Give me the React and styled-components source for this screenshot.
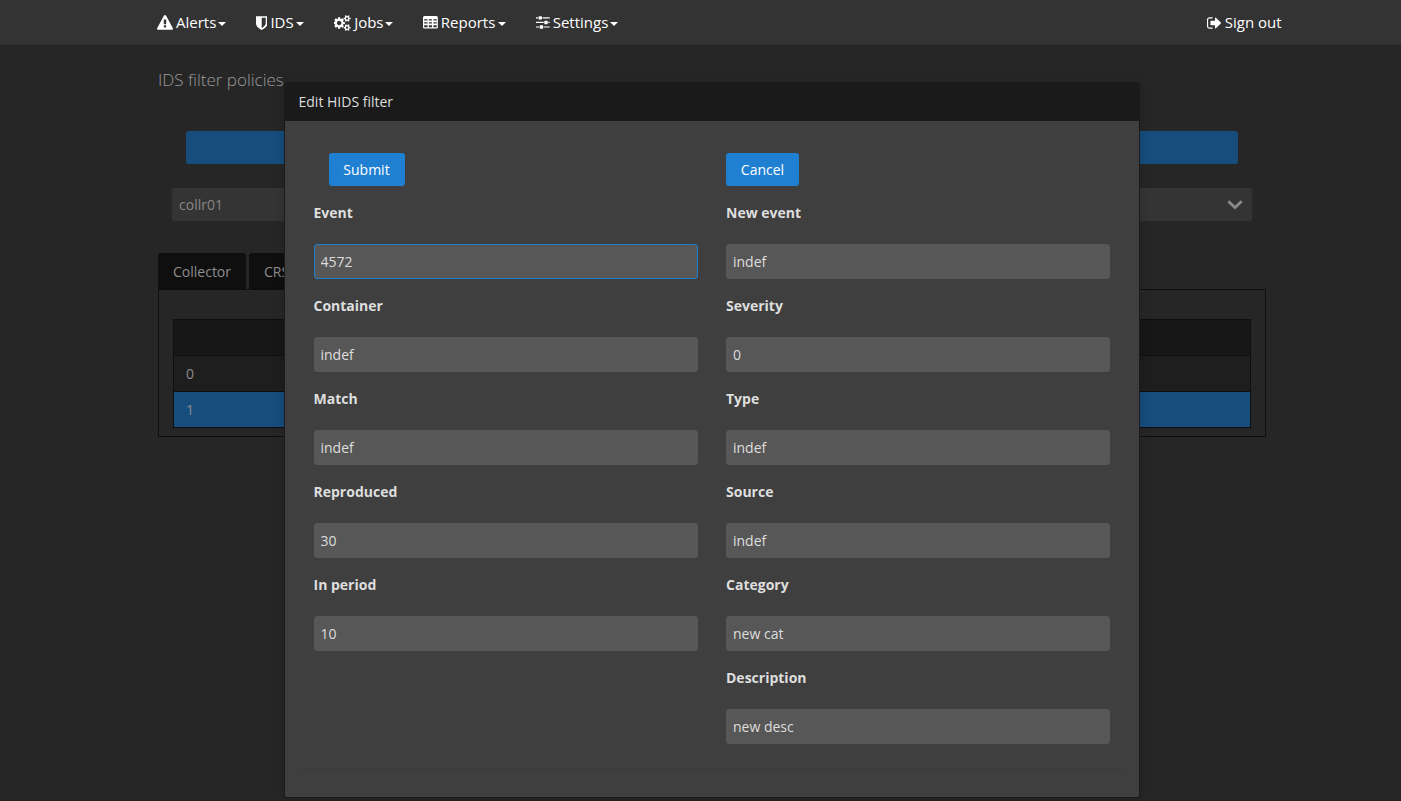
import React from "react";
import styled, { createGlobalStyle, css } from "styled-components";

const GlobalStyle = createGlobalStyle`
  *, *::before, *::after { box-sizing: border-box; }
  html, body { height: 100%; }
  body {
    margin: 0;
    overflow: hidden;
    background: #262626;
    color: #888;
    font-family: "Open Sans", "Liberation Sans", sans-serif;
    font-size: 14px;
    line-height: 20px;
  }
`;

const Navbar = styled.nav`
  height: 46px;
  background: #333;
  border-bottom: 1px solid #222;
`;

const NavInner = styled.div`
  width: 1125px;
  height: 44px;
  margin-left: 157px;
  display: flex;
  align-items: center;
  gap: 30px;
`;

const NavItem = styled.a`
  display: flex;
  align-items: center;
  width: ${(p) => p.$width}px;
  color: #fff;
  font-size: 15px;
  line-height: 20px;
  white-space: nowrap;
  ${(p) => p.$end && css`margin-left: auto;`}
`;

const NavIcon = styled.svg`
  flex: none;
  height: 16px;
  margin: 1px 3px 0 0;
  fill: #fff;
`;

const Caret = styled.span`
  margin: 3px 0 0 auto;
  border: 4px solid transparent;
  border-top-color: #fff;
  border-bottom: 0;
`;

const Page = styled.main`
  width: 1108px;
  margin-left: 158px;
  padding-top: 22px;
`;

const Title = styled.h1`
  margin: 0;
  font-size: 17px;
  line-height: 24px;
  font-weight: 300;
  color: #999;
`;

const BlueBar = styled.button`
  display: block;
  width: 1052px;
  height: 33px;
  margin: 39px 28px 0;
  border: 0;
  border-radius: 3px;
  background: #164d7d;
`;

const CollectorSelect = styled.div`
  display: flex;
  align-items: center;
  justify-content: space-between;
  height: 33px;
  margin: 24px 14px 0;
  padding: 0 9px 0 7px;
  border-radius: 3px;
  background: #343434;
  color: #868686;
`;

const Tabs = styled.div`
  display: flex;
  gap: 3px;
  margin-top: 32px;
`;

const Tab = styled.div`
  height: ${(p) => (p.$active ? 37 : 36)}px;
  padding: 9px 15px;
  width: ${(p) => p.$width}px;
  border-radius: 3px 3px 0 0;
  background: #0f0f0f;
  color: #8d8d8d;
`;

const TabPanel = styled.section`
  height: 148px;
  margin-top: -1px;
  padding: 29px 14px 0;
  border: 1px solid #0f0f0f;
`;

const Table = styled.div`
  border: 1px solid #0f0f0f;
`;

const TableRow = styled.div`
  height: ${(p) => (p.$last ? 35 : 36)}px;
  padding: 8px 12px;
  border-bottom: ${(p) => (p.$last ? 0 : 1)}px solid #0f0f0f;
  background: ${(p) => p.$bg};
  color: #8d8d8d;
`;

const Dialog = styled.div`
  position: absolute;
  top: 82px;
  left: 284px;
  width: 856px;
  height: 716px;
  border: 1px solid #1a1a1a;
  border-top: 0;
  border-radius: 3px;
  overflow: hidden;
  background: #3f3f3f;
  box-shadow: 0 0 12px rgba(0, 0, 0, 0.16);
`;

const DialogHeader = styled.header`
  height: 39px;
  padding: 10px 13.5px;
  background: #1a1a1a;
  color: #dedede;
`;

const Form = styled.form`
  display: grid;
  grid-template-columns: 384.5px 384px;
  column-gap: 28px;
  padding: 32px 29px 0 28.5px;
`;

const Column = styled.div`
  display: flex;
  flex-direction: column;
  align-items: flex-start;
`;

const Button = styled.button`
  width: ${(p) => p.$width}px;
  height: 33px;
  margin: 0 0 17px ${(p) => p.$indent || 0}px;
  padding: 0;
  border: 0;
  border-radius: 3px;
  background: #1f7fd1;
  color: #fff;
  font: inherit;
`;

const Field = styled.label`
  display: flex;
  flex-direction: column;
  gap: 21px;
  width: 100%;
  margin-bottom: 17px;
  font-weight: 700;
  color: #dedede;
`;

const Input = styled.input`
  width: 100%;
  height: 35px;
  padding: 0 6px;
  border: 1px solid ${(p) => (p.$active ? "#1f7fd1" : "#575757")};
  border-radius: 3px;
  outline: none;
  background: #575757;
  color: #dedede;
  font: inherit;
  font-weight: 400;
`;

const Divider = styled.hr`
  height: 1px;
  margin: 7px 14px 0;
  border: 0;
  background: #3b3b3b;
`;

const PATHS = {
  warning:
    "M1024 1375v-190q0-14-9.5-23.5t-22.5-9.5h-192q-13 0-22.5 9.5t-9.5 23.5v190q0 14 9.5 23.5t22.5 9.5h192q13 0 22.5-9.5t9.5-23.5zm-2-374l18-459q0-12-10-19-13-11-24-11h-220q-11 0-24 11-10 7-10 21l17 457q0 10 10 16.5t24 6.5h185q14 0 23.5-6.5t10.5-16.5zm-14-934l768 1408q35 63-2 126-17 29-46.5 46t-63.5 17h-1536q-34 0-63.5-17t-46.5-46q-37-63-2-126l768-1408q17-31 47-49t65-18 65 18 47 49z",
  shield:
    "M1088 960v-640h-448v1137q119-63 213-137 235-184 235-360zm192-768v768q0 86-33.5 170.5t-83 150-118 127.5-126.5 103-121 77.5-89.5 49.5-42.5 20q-12 6-26 6t-26-6q-16-7-42.5-20t-89.5-49.5-121-77.5-126.5-103-118-127.5-83-150-33.5-170.5v-768q0-26 19-45t45-19h1152q26 0 45 19t19 45z",
  cogs: "M832 896q0-106-75-181t-181-75-181 75-75 181 75 181 181 75 181-75 75-181zm768 512q0-52-38-90t-90-38-90 38-38 90q0 53 37.5 90.5t90.5 37.5 90.5-37.5 37.5-90.5zm0-1024q0-52-38-90t-90-38-90 38-38 90q0 53 37.5 90.5t90.5 37.5 90.5-37.5 37.5-90.5zm-384 421v185q0 10-7 19.5t-16 10.5l-155 24q-11 35-32 76 34 48 90 115 7 11 7 20 0 12-7 19-23 30-82.5 89.5t-78.5 59.5q-11 0-21-7l-115-90q-37 19-77 31-11 108-23 155-7 24-30 24h-186q-11 0-20-7.5t-10-17.5l-23-153q-34-10-75-31l-118 89q-7 7-20 7-11 0-21-8-144-133-144-160 0-9 7-19 10-14 41-53t47-61q-23-44-35-82l-152-24q-10-1-17-9.5t-7-19.5v-185q0-10 7-19.5t16-10.5l155-24q11-35 32-76-34-48-90-115-7-11-7-20 0-12 7-20 22-30 82-89t79-59q11 0 21 7l115 90q34-18 77-32 11-108 23-154 7-24 30-24h186q11 0 20 7.5t10 17.5l23 153q34 10 75 31l118-89q8-7 20-7 11 0 21 8 144 133 144 160 0 8-7 19-12 16-42 54t-45 60q23 48 34 82l152 23q10 2 17 10.5t7 19.5zm640 533v140q0 16-149 31-12 27-30 52 51 113 51 138 0 4-4 7-122 71-124 71-8 0-46-47t-52-68q-20 2-30 2t-30-2q-14 21-52 68t-46 47q-2 0-124-71-4-3-4-7 0-25 51-138-18-25-30-52-149-15-149-31v-140q0-16 149-31 13-29 30-52-51-113-51-138 0-4 4-7 4-2 35-20t59-34 30-16q8 0 46 46.5t52 67.5q20-2 30-2t30 2q51-71 92-112l6-2q4 0 124 70 4 3 4 7 0 25-51 138 17 23 30 52 149 15 149 31zm0-1024v140q0 16-149 31-12 27-30 52 51 113 51 138 0 4-4 7-122 71-124 71-8 0-46-47t-52-68q-20 2-30 2t-30-2q-14 21-52 68t-46 47q-2 0-124-71-4-3-4-7 0-25 51-138-18-25-30-52-149-15-149-31v-140q0-16 149-31 13-29 30-52-51-113-51-138 0-4 4-7 4-2 35-20t59-34 30-16q8 0 46 46.5t52 67.5q20-2 30-2t30 2q51-71 92-112l6-2q4 0 124 70 4 3 4 7 0 25-51 138 17 23 30 52 149 15 149 31z",
  table:
    "M160 112h1344q66 0 113 47t47 113v1088q0 66-47 113t-113 47H160q-66 0-113-47T0 1360V272q0-66 47-113t113-47zM128 464v160H512V464zm528 0v160h352V464zm512 0v160h368V464zM128 800v160H512V800zm528 0v160h352V800zm512 0v160h368V800zM128 1136v192q0 32 32 32h352v-224zm528 0v224h352v-224zm512 0v224h336q32 0 32-32v-192z",
  sliders:
    "M0 1280h352v128H0zM480 1152h256q64 0 64 64v256q0 64-64 64H480q-64 0-64-64v-256q0-64 64-64zM864 1280h672v128H864zM0 768h864v128H0zM992 640h256q64 0 64 64v256q0 64-64 64H992q-64 0-64-64V704q0-64 64-64zM1376 768h160v128h-160zM0 256h224v128H0zM352 128h256q64 0 64 64v256q0 64-64 64H352q-64 0-64-64V192q0-64 64-64zM736 256h800v128H736z",
  signout:
    "M640 1440q0 4 1 20t.5 26.5-3 23.5-10 19.5-20.5 6.5h-320q-119 0-203.5-84.5t-84.5-203.5v-704q0-119 84.5-203.5t203.5-84.5h320q13 0 22.5 9.5t9.5 22.5q0 4 1 20t.5 26.5-3 23.5-10 19.5-20.5 6.5h-320q-66 0-113 47t-47 113v704q0 66 47 113t113 47h312l11.5 1 11.5 3 8 5.5 7 9 2 13.5zm928-544q0 26-19 45l-544 544q-19 19-45 19t-45-19-19-45v-288h-448q-26 0-45-19t-19-45v-384q0-26 19-45t45-19h448v-288q0-26 19-45t45-19 45 19l544 544q19 19 19 45z",
};

function Glyph({ name, box }) {
  return (
    <NavIcon viewBox={`0 0 ${box} 1792`} width={box / 112}>
      <path fillRule="evenodd" d={PATHS[name]} />
    </NavIcon>
  );
}

const MENU = [
  { label: "Alerts", icon: "warning", box: 1792, width: 69 },
  { label: "IDS", icon: "shield", box: 1280, width: 48 },
  { label: "Jobs", icon: "cogs", box: 1920, width: 59 },
  { label: "Reports", icon: "table", box: 1664, width: 83 },
  { label: "Settings", icon: "sliders", box: 1536, width: 82 },
];

const LEFT = [
  ["Event", "4572"],
  ["Container", "indef"],
  ["Match", "indef"],
  ["Reproduced", "30"],
  ["In period", "10"],
];

const RIGHT = [
  ["New event", "indef"],
  ["Severity", "0"],
  ["Type", "indef"],
  ["Source", "indef"],
  ["Category", "new cat"],
  ["Description", "new desc"],
];

function Fields({ items, active }) {
  return items.map(([label, value]) => (
    <Field key={label}>
      {label}
      <Input defaultValue={value} $active={label === active} />
    </Field>
  ));
}

export default function App() {
  return (
    <>
      <GlobalStyle />
      <Navbar>
        <NavInner>
          {MENU.map((m) => (
            <NavItem key={m.label} $width={m.width}>
              <Glyph name={m.icon} box={m.box} />
              {m.label}
              <Caret />
            </NavItem>
          ))}
          <NavItem $end $width={75}>
            <Glyph name="signout" box={1664} />
            Sign out
          </NavItem>
        </NavInner>
      </Navbar>
      <Page>
        <Title>IDS filter policies</Title>
        <BlueBar />
        <CollectorSelect>
          collr01
          <svg width="16" height="10" viewBox="0 0 16 10" fill="none" stroke="#8a8a8a" strokeWidth="2.7">
            <path d="M1.3 1.3L8 7.6l6.7-6.3" />
          </svg>
        </CollectorSelect>
        <Tabs>
          <Tab $active $width={88}>Collector</Tab>
          <Tab $width={62}>CRS</Tab>
        </Tabs>
        <TabPanel>
          <Table>
            <TableRow $bg="#171717" />
            <TableRow $bg="#1e1e1e">0</TableRow>
            <TableRow $bg="#164d7d" $last>1</TableRow>
          </Table>
        </TabPanel>
      </Page>
      <Dialog role="dialog">
        <DialogHeader>Edit HIDS filter</DialogHeader>
        <Form>
          <Column>
            <Button type="button" $width={76} $indent={15}>Submit</Button>
            <Fields items={LEFT} active="Event" />
          </Column>
          <Column>
            <Button type="button" $width={73}>Cancel</Button>
            <Fields items={RIGHT} />
          </Column>
        </Form>
        <Divider />
      </Dialog>
    </>
  );
}
